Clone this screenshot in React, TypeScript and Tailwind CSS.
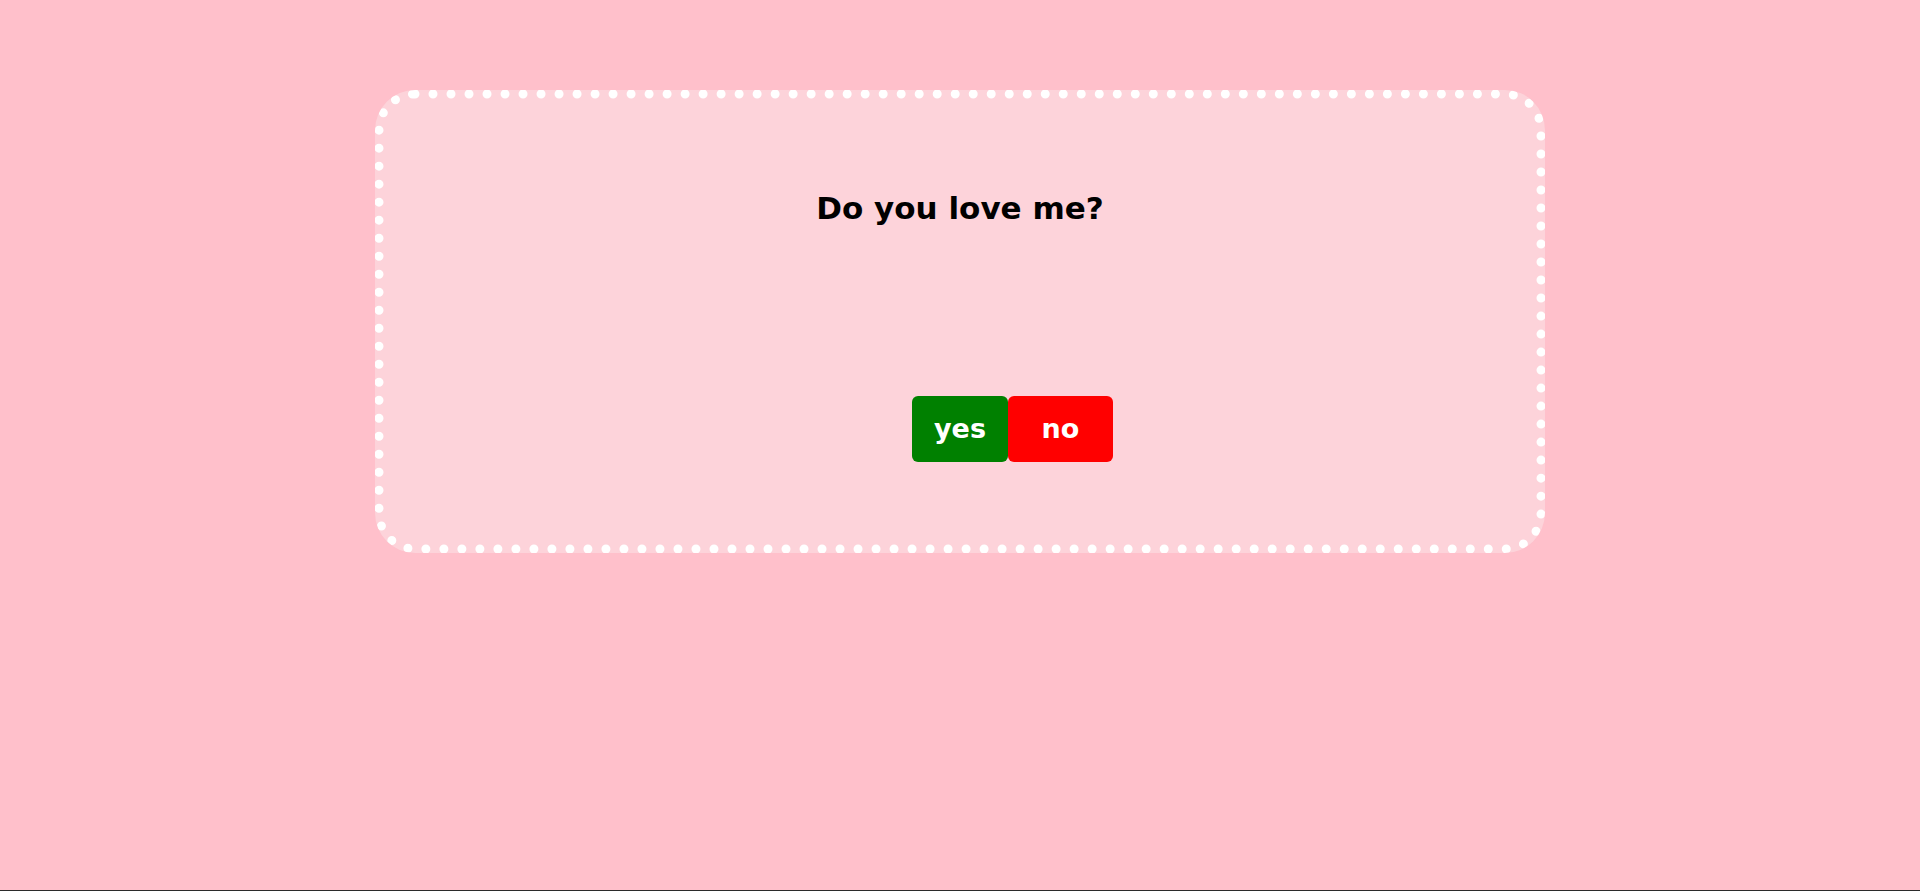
const FONT = { fontFamily: '"Comic Sans MS", "DejaVu Sans", sans-serif' };

export default function App() {
  return (
    <div className="min-h-screen bg-[#ffc0cb] flex flex-col" style={FONT}>
      <div className="flex-1 pt-[90px]">
        <div className="mx-auto w-[1170px] h-[463px] rounded-[40px] border-[9px] border-dotted border-white bg-[#fdd3da] flex flex-col items-center">
          <h1 className="mt-[94px] text-[31px] leading-none font-bold text-black">
            Do you love me?
          </h1>

          {/* yes sits in the middle, no hangs to its right */}
          <div className="mt-[172px] w-full grid grid-cols-[1fr_auto_1fr]">
            <div />
            <button className="w-[96px] h-[66px] rounded-md bg-[#008000] text-white text-[27px] font-bold">
              yes
            </button>
            <div className="flex justify-start">
              <button className="w-[105px] h-[66px] rounded-md bg-[#ff0000] text-white text-[27px] font-bold">
                no
              </button>
            </div>
          </div>
        </div>
      </div>
      <div className="h-px bg-[#2b2b2b]" />
    </div>
  );
}
